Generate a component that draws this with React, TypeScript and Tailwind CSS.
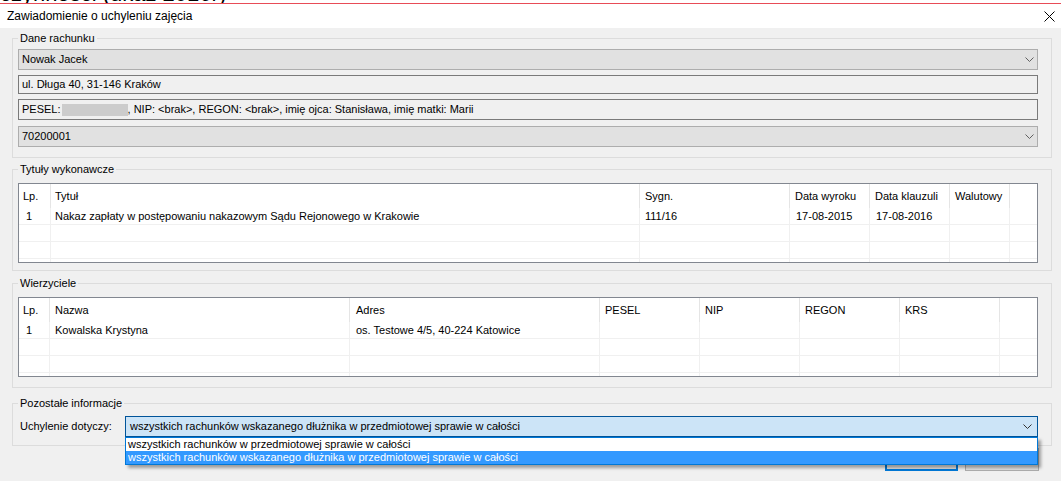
import React from 'react';

type Col = { label: string; cls: string; rowCls: string };

const tytulyCols: Col[] = [
  { label: 'Lp.', cls: 'w-[32px] pl-[4px]', rowCls: 'w-[32px] pl-[7px]' },
  { label: 'Tytuł', cls: 'w-[589px] pl-[4px]', rowCls: 'w-[589px] pl-[4px]' },
  { label: 'Sygn.', cls: 'w-[150px] pl-[5px]', rowCls: 'w-[150px] pl-[5px]' },
  { label: 'Data wyroku', cls: 'w-[80px] pl-[5px]', rowCls: 'w-[80px] pl-[6px]' },
  { label: 'Data klauzuli', cls: 'w-[80px] pl-[5px]', rowCls: 'w-[80px] pl-[6px]' },
  { label: 'Walutowy', cls: 'w-[60px] pl-[5px]', rowCls: 'w-[60px] pl-[5px]' },
];

const tytulyRows: string[][] = [
  ['1', 'Nakaz zapłaty w postępowaniu nakazowym Sądu Rejonowego w Krakowie', '111/16', '17-08-2015', '17-08-2016', ''],
  ['', '', '', '', '', ''],
  ['', '', '', '', '', ''],
  ['', '', '', '', '', ''],
];

const wierzycieleCols: Col[] = [
  { label: 'Lp.', cls: 'w-[31px] pl-[4px]', rowCls: 'w-[31px] pl-[7px]' },
  { label: 'Nazwa', cls: 'w-[300px] pl-[5px]', rowCls: 'w-[300px] pl-[5px]' },
  { label: 'Adres', cls: 'w-[250px] pl-[6px]', rowCls: 'w-[250px] pl-[6px]' },
  { label: 'PESEL', cls: 'w-[100px] pl-[5px]', rowCls: 'w-[100px] pl-[5px]' },
  { label: 'NIP', cls: 'w-[100px] pl-[5px]', rowCls: 'w-[100px] pl-[5px]' },
  { label: 'REGON', cls: 'w-[100px] pl-[5px]', rowCls: 'w-[100px] pl-[5px]' },
  { label: 'KRS', cls: 'w-[100px] pl-[5px]', rowCls: 'w-[100px] pl-[5px]' },
];

const wierzycieleRows: string[][] = [
  ['1', 'Kowalska Krystyna', 'os. Testowe 4/5, 40-224 Katowice', '', '', '', ''],
  ['', '', '', '', '', '', ''],
  ['', '', '', '', '', '', ''],
  ['', '', '', '', '', '', ''],
];

function Chevron({ className = '' }: { className?: string }) {
  return (
    <svg width="9" height="5" viewBox="0 0 9 5" className={className}>
      <path d="M0.5 0.5 L4.5 4.5 L8.5 0.5" fill="none" stroke="currentColor" strokeWidth="1" />
    </svg>
  );
}

function GroupBox({ title, className = '', children }: { title: string; className?: string; children: React.ReactNode }) {
  return (
    <fieldset className={`border border-[#dcdcdc] ${className}`}>
      <legend className="ml-[5px] px-[2px] leading-[15px]">{title}</legend>
      {children}
    </fieldset>
  );
}

function ComboBox({ value }: { value: string }) {
  return (
    <div className="h-[21px] border border-[#adadad] bg-[#e1e1e1] flex items-center justify-between pl-[3px] pr-[3px]">
      <span>{value}</span>
      <Chevron className="text-[#606060]" />
    </div>
  );
}

function Grid({ cols, rows }: { cols: Col[]; rows: string[][] }) {
  return (
    <div className="h-[80px] border border-[#828790] bg-white overflow-hidden">
      <div className="flex h-[24px]">
        {cols.map((c) => (
          <div key={c.label} className={`${c.cls} shrink-0 border-r border-[#e5e5e5] flex items-center whitespace-nowrap`}>
            {c.label}
          </div>
        ))}
        <div className="flex-1" />
      </div>
      {rows.map((r, i) => (
        <div key={i} className="flex h-[17px] shrink-0 border-b border-[#f0f0f0]">
          {cols.map((c, j) => (
            <div key={j} className={`${c.rowCls} shrink-0 border-r border-[#f0f0f0] flex items-center pt-[1px] whitespace-nowrap overflow-hidden`}>
              {r[j]}
            </div>
          ))}
          <div className="flex-1" />
        </div>
      ))}
    </div>
  );
}

export default function App() {
  return (
    <div className="w-[1061px] h-[481px] bg-[#f0f0f0] overflow-hidden font-['Liberation_Sans',Arial,sans-serif] text-[11px] text-black">
      {/* fragment of the window behind */}
      <div className="h-[3px] bg-white overflow-hidden">
        <div className="-mt-[17px] text-[22px] leading-[22px] whitespace-nowrap">czynności (ukaz 2016r)</div>
      </div>
      <div className="h-px bg-[#e84c57]" />

      {/* title bar */}
      <div className="h-[24px] bg-white flex items-center justify-between pl-[7px] pr-[6px]">
        <span className="text-[12px] -mt-[1px]">Zawiadomienie o uchyleniu zajęcia</span>
        <svg width="11" height="11" viewBox="0 0 11 11">
          <path d="M0.5 0.5 L10.5 10.5 M10.5 0.5 L0.5 10.5" stroke="#000" strokeWidth="1" fill="none" />
        </svg>
      </div>

      <div className="pl-[12px] pr-[9px] pt-[3px]">
        <GroupBox title="Dane rachunku">
          <div className="pl-[5px] pr-[13px] pt-[3px] pb-[10px] flex flex-col">
            <ComboBox value="Nowak Jacek" />
            <div className="mt-[5px] h-[19px] border border-[#7a7a7a] bg-[#f0f0f0] flex items-center pl-[3px]">
              ul. Długa 40, 31-146 Kraków
            </div>
            <div className="mt-[5px] h-[21px] border border-[#7a7a7a] bg-[#f0f0f0] flex items-center pl-[3px] whitespace-nowrap">
              <span>PESEL:</span>
              <span className="inline-block w-[66px] h-[12px] ml-[1px] bg-[#cccccc]" />
              <span>, NIP: &lt;brak&gt;, REGON: &lt;brak&gt;, imię ojca: Stanisława, imię matki: Marii</span>
            </div>
            <div className="mt-[6px]">
              <ComboBox value="70200001" />
            </div>
          </div>
        </GroupBox>

        <GroupBox title="Tytuły wykonawcze" className="mt-[4px]">
          <div className="pl-[5px] pr-[13px] pt-[6px] pb-[7px]">
            <Grid cols={tytulyCols} rows={tytulyRows} />
          </div>
        </GroupBox>

        <GroupBox title="Wierzyciele" className="mt-[5px]">
          <div className="pl-[5px] pr-[13px] pt-[6px] pb-[10px]">
            <Grid cols={wierzycieleCols} rows={wierzycieleRows} />
          </div>
        </GroupBox>

        <GroupBox title="Pozostałe informacje" className="mt-[8px]">
          <div className="pl-[7px] pr-[13px] pt-[5px] pb-[8px] flex items-center">
            <span className="w-[105px] shrink-0">Uchylenie dotyczy:</span>
            <div className="relative flex-1">
              <div className="h-[21px] border border-[#005499] bg-[#cce4f7] flex items-center justify-between pl-[4px] pr-[5px]">
                <span>wszystkich rachunków wskazanego dłużnika w przedmiotowej sprawie w całości</span>
                <Chevron className="text-[#333333]" />
              </div>
              {/* open dropdown list */}
              <div className="absolute left-0 right-0 top-full z-10 border border-[#0078d7] bg-white shadow-[3px_3px_3px_rgba(0,0,0,0.35)]">
                <div className="h-[13px] leading-[13px] pl-[2px] whitespace-nowrap">
                  wszystkich rachunków w przedmiotowej sprawie w całości
                </div>
                <div className="h-[13px] leading-[13px] pl-[2px] bg-[#3399ff] text-white whitespace-nowrap">
                  wszystkich rachunków wskazanego dłużnika w przedmiotowej sprawie w całości
                </div>
              </div>
            </div>
          </div>
        </GroupBox>

        <div className="mt-[2px] flex justify-end gap-[7px] pr-[13px]">
          <button className="w-[73px] h-[23px] border-2 border-[#0078d7] bg-[#e1e1e1] flex items-center justify-center">
            Zapisz
          </button>
          <button className="w-[74px] h-[23px] border border-[#adadad] bg-[#e1e1e1] flex items-center justify-center">
            Anuluj
          </button>
        </div>
      </div>
    </div>
  );
}
